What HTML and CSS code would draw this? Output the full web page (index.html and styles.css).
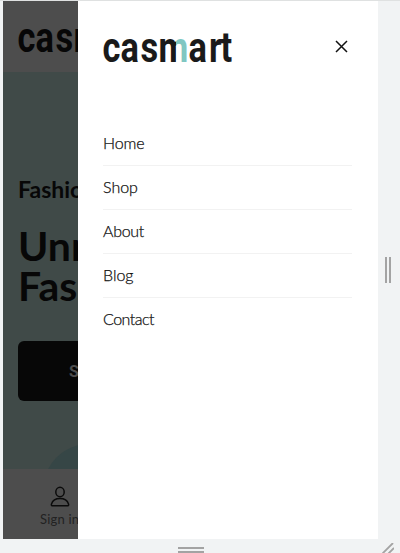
FILE: index.html
```
<!DOCTYPE html>
<html lang="en">
<head>
<meta charset="utf-8">
<title>casmart</title>
<link rel="stylesheet" href="styles.css">
</head>
<body>
<div class="device">
  <div class="screen">
    <div class="page">
      <header class="header">
        <svg class="logo" width="132" height="34" viewBox="0 0 132 34">
          <g class="wordmark" transform="scale(.8 1)"><text y="31.500" x="-.5 22 47 69.500">casm</text></g>
        </svg>
      </header>
      <main class="hero">
        <p class="eyebrow">Fashion</p>
        <h1 class="title">Unrivaled<br>Fashion</h1>
        <a class="cta">SHOP NOW</a>
        <div class="circle"></div>
      </main>
      <footer class="tabbar">
        <div class="tab">
          <svg width="20" height="22" viewBox="0 0 20 22" fill="none" stroke="#0b0b0b" stroke-width="1.5"><ellipse cx="10" cy="6" rx="4.2" ry="4.7"/><path d="M2.200 19.800C1.200 19.800 1.200 18.800 1.500 17.900C2.700 14.100 6 12.600 10 12.600s7.300 1.500 8.500 5.300c.3.900.3 1.900-.7 1.900z"/></svg>
          <span>Sign in</span>
        </div>
      </footer>
    </div>
    <aside class="drawer">
      <div class="drawer-head">
        <svg class="logo" width="132" height="34" viewBox="0 0 132 34">
          <defs><linearGradient id="leg" gradientUnits="userSpaceOnUse" x1="69" x2="109" y1="0" y2="0"><stop offset=".57" stop-color="#1a1a1a"/><stop offset=".57" stop-color="#80c7c2"/></linearGradient></defs>
          <g class="wordmark light" transform="scale(.8 1)"><text y="31.500" x="-.5 22 47 69.500 107 132.500 147">cas<tspan class="m">m</tspan>art</text></g>
        </svg>
        <svg class="close" width="13" height="13" viewBox="0 0 13 13"><path d="M1 1l11 11M12 1L1 12" stroke="#111" stroke-width="1.5"/></svg>
      </div>
      <nav class="menu">
        <a class="home">Home</a>
        <a class="shop">Shop</a>
        <a class="about">About</a>
        <a class="blog">Blog</a>
        <a class="contact">Contact</a>
      </nav>
    </aside>
  </div>
  <div class="side"><i></i></div>
  <div class="bottom"><i></i></div>
  <svg class="corner" width="12" height="10" viewBox="0 0 12 10" stroke="#a3a3a3" stroke-width="1.800"><path d="M0 11L11 0M6 11L12 5"/></svg>
</div>
</body>
</html>
```
FILE: styles.css
```
* { box-sizing: border-box; margin: 0; padding: 0; }
body { width: 400px; height: 553px; overflow: hidden; font-family: Lato, sans-serif; }
.device {
  position: relative;
  display: grid;
  grid-template: 538px 14px / 375px 22px;
  height: 553px;
  padding-left: 3px;
  border-top: 1px solid #dfe1e1;
  background: #f1f3f4;
}
.screen { display: flex; overflow: hidden; background: #fff; }
.page {
  display: flex;
  flex-direction: column;
  width: 75px;
  overflow: hidden;
  color: #070707;
  white-space: nowrap;
}
.header { height: 71px; padding: 19px 0 0 15px; background: #4d4d4d; }
.logo { display: block; flex: none; overflow: visible; }
.wordmark { font: 700 43px Roboto, sans-serif; fill: #070707; }
.light { fill: #1a1a1a; }
.m { fill: url(#leg); }
.hero {
  height: 397px;
  padding: 101px 0 0 15px;
  overflow: hidden;
  background: #404a48;
}
.eyebrow { height: 32px; font-size: 23px; line-height: 32px; font-weight: 700; }
.title { margin-top: 21px; font-size: 41px; line-height: 40px; font-weight: 700; }
.cta {
  display: block;
  width: 345px;
  height: 60px;
  margin-top: 35px;
  padding-left: 51px;
  border-radius: 6px;
  background: #070707;
  color: #4d4d4d;
  font: 700 16px/61px Roboto, sans-serif;
}
.circle { width: 92px; height: 92px; margin: 43px 0 0 25px; border-radius: 50%; background: #364646; }
.tabbar { height: 70px; padding: 17px 0 0 37px; background: #4d4d4d; }
.tab { display: flex; flex-direction: column; width: 40px; font-size: 13px; line-height: 18px; color: #222; }
.tab svg { margin-left: 10px; }
.tab span { margin-top: 2px; letter-spacing: .2px; }
.drawer { width: 300px; padding: 29px 26px 0 25px; background: #fff; }
.drawer-head { display: flex; justify-content: space-between; height: 92px; }
.close { margin: 10px 4px 0 0; }
.menu a {
  display: block;
  height: 44px;
  border-bottom: 1px solid #f2f2f2;
  font-size: 16px;
  font-weight: 300;
  line-height: 42px;
  color: #111;
  -webkit-text-stroke: .25px #111;
}
.menu .home { letter-spacing: -.15px; }
.menu .about { letter-spacing: -.3px; }
.menu .contact { letter-spacing: -.5px; }
.menu a:last-child { border-bottom: 0; }
.side, .bottom { display: flex; align-items: center; justify-content: center; }
.side i { width: 6px; height: 26px; margin-right: 1px; border: solid #a3a3a3; border-width: 0 2px; }
.side { border-right: 1px solid #f1f3f4; }
.bottom i { width: 26px; height: 6px; margin-top: 8px; border: solid #a3a3a3; border-width: 2px 0; }
.corner { position: absolute; right: 6px; bottom: 0; fill: none; }
```
